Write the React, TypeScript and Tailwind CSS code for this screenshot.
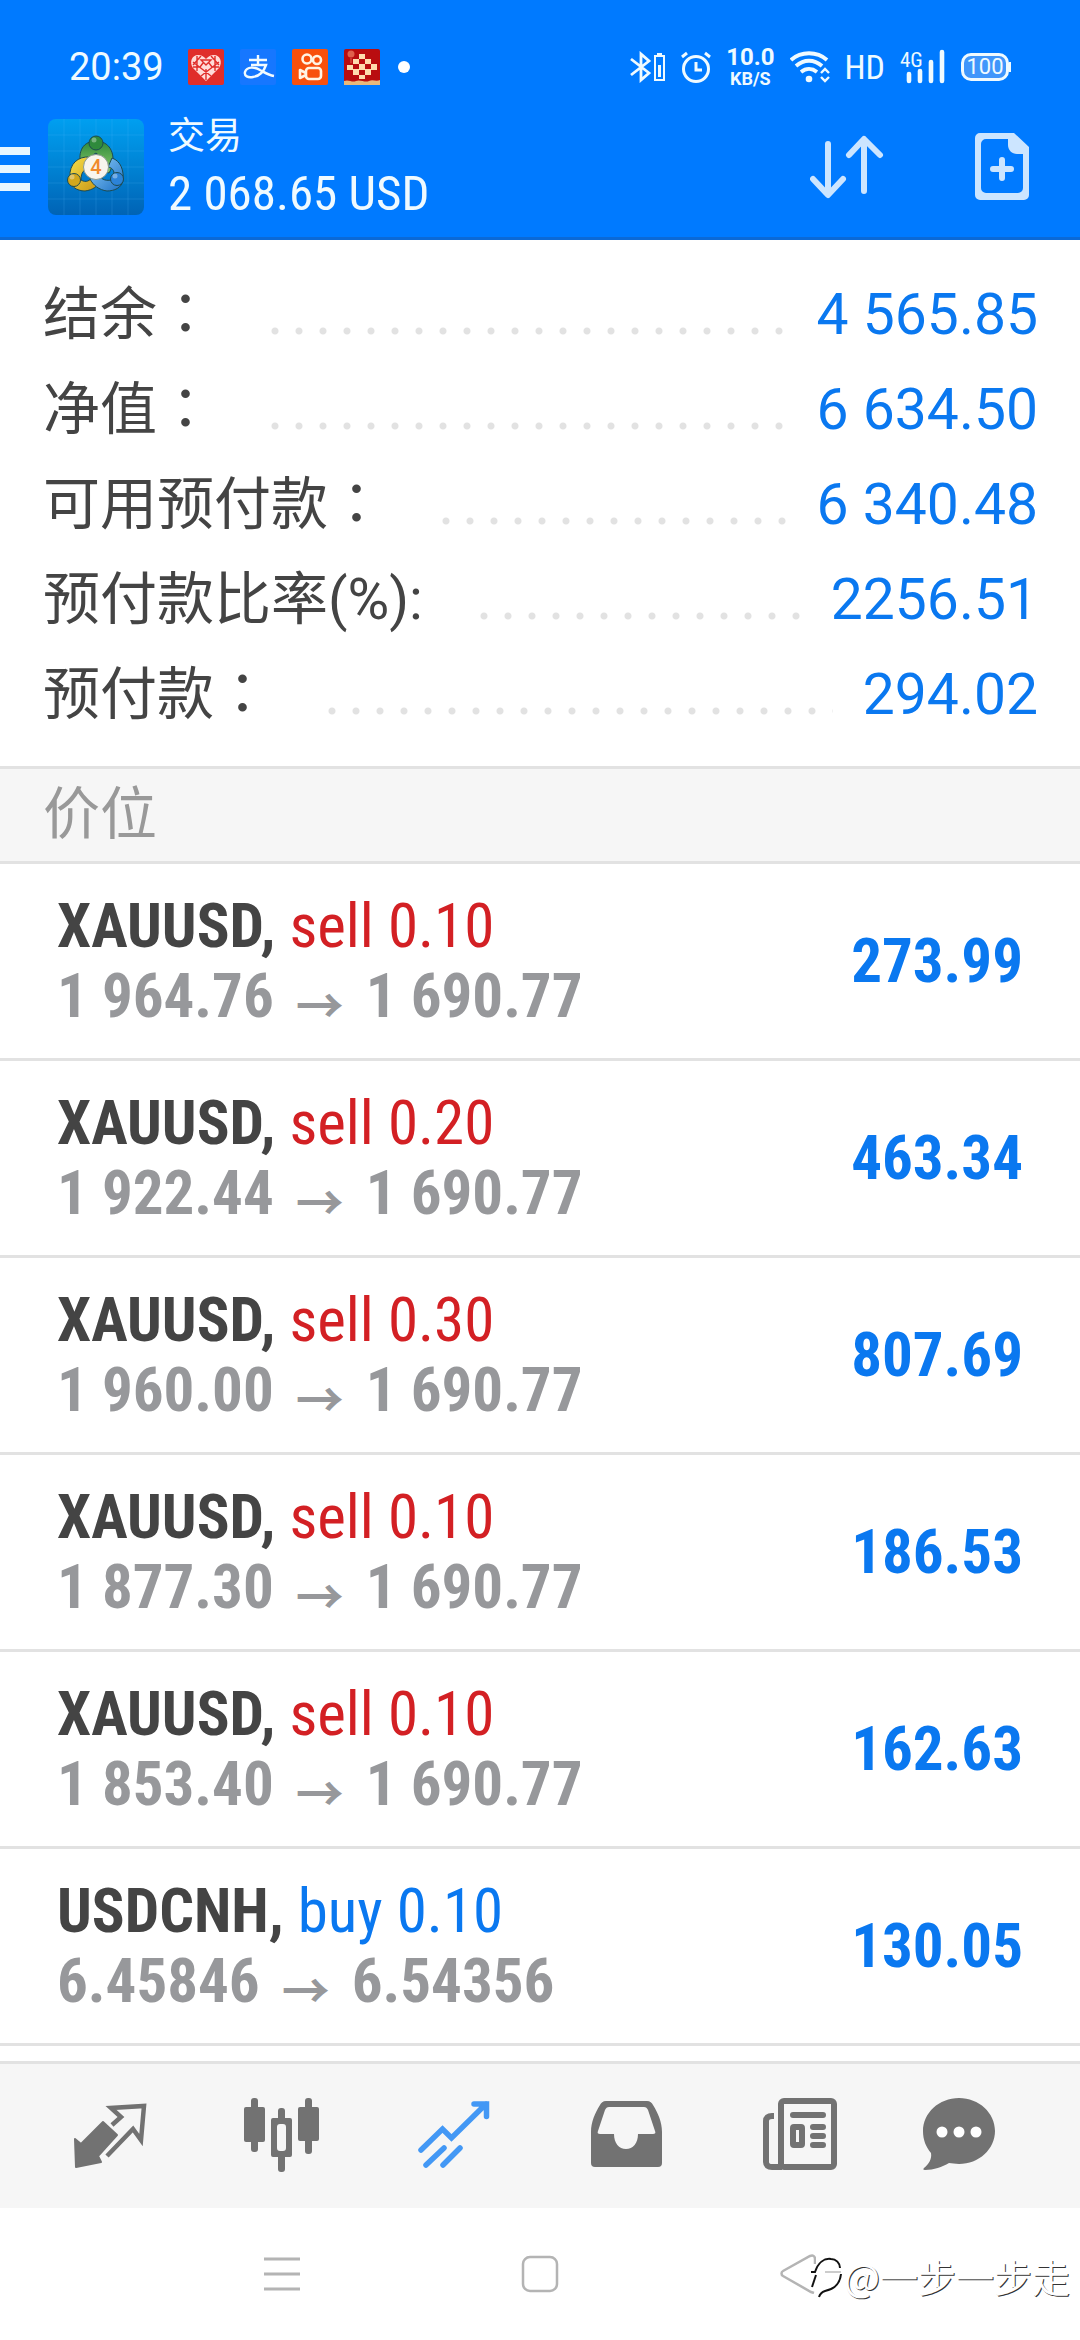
import React from 'react'

const ACCOUNT = [
    { label: '结余', colon: '：', value: '4 565.85' },
    { label: '净值', colon: '：', value: '6 634.50' },
    { label: '可用预付款', colon: '：', value: '6 340.48' },
    { label: '预付款比率(%)', colon: ':', value: '2256.51' },
    { label: '预付款', colon: '：', value: '294.02' },
]

const POSITIONS = [
    { symbol: 'XAUUSD', side: 'sell', volume: '0.10', open: '1 964.76', current: '1 690.77', profit: '273.99' },
    { symbol: 'XAUUSD', side: 'sell', volume: '0.20', open: '1 922.44', current: '1 690.77', profit: '463.34' },
    { symbol: 'XAUUSD', side: 'sell', volume: '0.30', open: '1 960.00', current: '1 690.77', profit: '807.69' },
    { symbol: 'XAUUSD', side: 'sell', volume: '0.10', open: '1 877.30', current: '1 690.77', profit: '186.53' },
    { symbol: 'XAUUSD', side: 'sell', volume: '0.10', open: '1 853.40', current: '1 690.77', profit: '162.63' },
    { symbol: 'USDCNH', side: 'buy', volume: '0.10', open: '6.45846', current: '6.54356', profit: '130.05' },
]

const HeartAppIcon = () => (
    <svg className="size-9" viewBox="0 0 36 36">
        <rect width="36" height="36" rx="2" fill="#e02e2a" />
        <path d="M18 32 5 19C1 13 4 6 10 6c4 0 6 2 8 4 2-2 4-4 8-4 6 0 9 7 5 13Z" fill="#ffdcd8" />
        <path d="M9 7v15M13 7l-8 9M5 13l18 14M23 7l8 9M31 13 13 27M27 7v15M13 11h10l-5 5ZM18 20v11M5 18h7l3-4M31 18h-7l-3-4" fill="none" stroke="#e02e2a" strokeWidth="1.4" />
    </svg>
)

const AlipayIcon = () => (
    <svg className="size-9" viewBox="0 0 36 36">
        <rect width="36" height="36" rx="2" fill="#1677ff" />
        <path d="M9 11h18M18 6v10M11 16h15c-2 6-6 11-13 12-5 1-9-1-8-5 2-6 10-5 15-2 4 2 8 5 14 6" fill="none" stroke="#f2fbff" strokeWidth="2.4" />
    </svg>
)

const CameraAppIcon = () => (
    <svg className="size-9" viewBox="0 0 36 36">
        <rect width="36" height="36" rx="2" fill="#f8500c" />
        <g fill="none" stroke="#fff4e4" strokeWidth="2.6" strokeLinejoin="round">
            <circle cx="15" cy="10" r="4.5" />
            <circle cx="25" cy="11" r="4" />
            <rect x="14" y="19" width="15" height="11" rx="3" />
            <path d="m14 24-6-3v8l6-3" />
        </g>
    </svg>
)

const BoardAppIcon = () => (
    <svg className="size-9" viewBox="0 0 36 36">
        <rect width="36" height="36" rx="2" fill="#b90d10" />
        <path d="M15 5h6v5h-6zM9 10h6v5H9zM21 10h6v5h-6zM3 16h6v5H3zM15 15h6v6h-6zM27 15h6v6h-6zM9 20h6v6H9zM21 20h6v6h-6zM15 26h6v4h-6z" fill="#ffdcae" />
        <path d="M0 36v-4c5-2 8 2 12 0s9 2 13 0 7 1 11-1v5Z" fill="#e8b97c" />
        <circle cx="7" cy="5" r="3.5" fill="#e0604c" />
        <path d="M7 9v5" stroke="#e0604c" strokeWidth="1" />
    </svg>
)

const BluetoothIcon = () => (
    <svg className="h-8 w-9" viewBox="0 0 36 32" fill="none" stroke="#effaff" strokeWidth="2.8">
        <path d="m1 8 18 14-8 7V3l8 7L1 24" />
        <rect x="25" y="5" width="9" height="24" strokeWidth="2" />
        <path d="M27 3h5" strokeWidth="2" />
        <path d="M29.5 14v12" strokeWidth="3" />
    </svg>
)

const AlarmIcon = () => (
    <svg className="h-8 w-[30px]" viewBox="0 0 30 32" fill="none" stroke="#effaff" strokeWidth="3">
        <circle cx="15" cy="18" r="12.5" />
        <path d="M15 11v8h6M1 6l5-4M29 6l-5-4" />
    </svg>
)

const WifiIcon = () => (
    <svg className="h-8 w-10" viewBox="0 0 40 32" fill="none" stroke="#effaff" strokeWidth="3.8">
        <path d="M1 9C11 0 27 0 37 9M6 15c8-7 18-7 26 0M11 21c5-4 11-4 16 0" />
        <circle cx="19" cy="28" r="3.3" fill="#effaff" stroke="none" />
        <path d="m31 22 4-4 4 4M31 26l4 4 4-4" strokeWidth="2.4" />
    </svg>
)

const SignalIcon = () => (
    <svg className="h-10 w-[46px]" viewBox="0 -4 46 40">
        <text x="0" y="16" fontSize="21" fill="#effaff" fontFamily="Roboto Condensed, Liberation Sans Narrow, sans-serif">4G</text>
        <path d="M9 23v7M20 20v10M31 11v19M42 1v29" stroke="#effaff" strokeWidth="4.6" strokeLinecap="round" />
    </svg>
)

const StatusBar = () => (
    <div className="flex h-24 items-center justify-between px-[69px] pt-[38px] text-[#effaff]">
        <div className="flex items-center">
            <span className="mr-6 font-[Roboto] text-[38px] leading-10">20:39</span>
            <div className="flex items-center gap-4">
                <HeartAppIcon />
                <AlipayIcon />
                <CameraAppIcon />
                <BoardAppIcon />
                <span className="ml-0.5 size-3 rounded-full bg-white" />
            </div>
        </div>
        <div className="flex items-center gap-[15px]">
            <BluetoothIcon />
            <AlarmIcon />
            <div className="flex flex-col items-center font-[Roboto] font-bold">
                <span className="text-[24px] leading-6">10.0</span>
                <span className="text-[18px] leading-5">KB/S</span>
            </div>
            <WifiIcon />
            <span className="font-['Roboto_Condensed','Liberation_Sans_Narrow',sans-serif] text-[34px] leading-8">HD</span>
            <SignalIcon />
            <div className="flex items-center">
                <span className="flex h-7 w-12 items-center justify-center rounded-[10px] border-3 border-[#effaff] bg-[#3f96fb] font-[Roboto] text-[22px] leading-6">100</span>
                <span className="h-2.5 w-0.5 bg-[#effaff]" />
            </div>
        </div>
    </div>
)

const AppLogo = () => (
    <svg className="size-24" viewBox="0 0 96 96">
        <defs>
            <linearGradient id="logoBg" x1="0" y1="0" x2="0" y2="1">
                <stop offset="0" stopColor="#009ff0" />
                <stop offset="0.5" stopColor="#0083d4" />
                <stop offset="1" stopColor="#0063b5" />
            </linearGradient>
            <linearGradient id="green" x1="0" y1="0" x2="0" y2="1">
                <stop offset="0" stopColor="#2f8a3c" />
                <stop offset="1" stopColor="#8fce6c" />
            </linearGradient>
            <linearGradient id="yellow" x1="0" y1="0" x2="1" y2="1">
                <stop offset="0" stopColor="#f7e04a" />
                <stop offset="1" stopColor="#c79314" />
            </linearGradient>
            <linearGradient id="blue" x1="0" y1="0" x2="1" y2="1">
                <stop offset="0" stopColor="#8fd0fa" />
                <stop offset="1" stopColor="#1c6fc4" />
            </linearGradient>
        </defs>
        <rect width="96" height="96" rx="8" fill="url(#logoBg)" />
        <path d="M16 0v96M32 0v96M48 0v96M64 0v96M80 0v96M0 16h96M0 32h96M0 48h96M0 64h96M0 80h96" stroke="#5cc4ff" strokeOpacity="0.18" />
        <g stroke="#1d4a50" strokeWidth="1">
            <path d="M36 50C29 42 31 26 42 23h12c12 4 14 20 7 31l-9-3c4-6 4-11-4-17-6 3-8 9-4 16Z" fill="url(#green)" />
            <path d="M42 38c-12-1-21 7-20 20-2 9 7 14 15 14 8-1 13-5 15-10l-7-5c-3 5-7 7-12 4 0-8 3-11 9-12Z" fill="url(#yellow)" />
            <path d="M64 39c9 3 12 13 11 22-1 8-9 11-16 11-8-1-14-6-17-12l7-6c4 7 10 9 17 6 1-8-1-11-6-12Z" fill="url(#blue)" />
            <circle cx="48" cy="24" r="7" fill="#2f8a3c" />
            <circle cx="26" cy="61" r="6.5" fill="#d2a71c" />
            <circle cx="69" cy="60" r="6.5" fill="#2c83d8" />
        </g>
        <g fill="#ffffff" fillOpacity="0.35">
            <circle cx="46" cy="21" r="2.5" />
            <circle cx="24" cy="58" r="2.5" />
            <circle cx="67" cy="57" r="2.5" />
        </g>
        <circle cx="48" cy="48" r="12.5" fill="#f8f5ee" stroke="#8a9a90" />
        <text x="48" y="55" textAnchor="middle" fontSize="20" fill="#f08a2c" fontWeight="500" fontFamily="Roboto, sans-serif">4</text>
    </svg>
)

const SortIcon = () => (
    <svg className="h-16 w-[74px]" viewBox="0 0 74 64" fill="none" stroke="#cce5ff" strokeWidth="6" strokeLinecap="round" strokeLinejoin="round">
        <path d="M18 9v50M3 44l15 16 15-16M54 56V5M39 20 54 4l16 16" />
    </svg>
)

const NewOrderIcon = () => (
    <svg className="h-[67px] w-[54px]" viewBox="0 0 54 67">
        <path d="M5 0h34l15 14v48a5 5 0 0 1-5 5H5a5 5 0 0 1-5-5V5a5 5 0 0 1 5-5ZM11 6a5 5 0 0 0-5 5v44a5 5 0 0 0 5 5h32a5 5 0 0 0 5-5V21h-6c-5 0-9-4-9-9V6Z" fill="#cce5ff" fillRule="evenodd" />
        <path d="M27 27v18M18 36h18" stroke="#cce5ff" strokeWidth="6" strokeLinecap="round" />
    </svg>
)

const AppBar = () => (
    <div className="flex h-36 items-center border-b-3 border-[#0b69d6] pr-[51px]">
        <button aria-label="Menu" className="flex w-[30px] flex-col gap-2.5 pt-1">
            <span className="h-2 w-full bg-[#e8f6ff]" />
            <span className="h-2 w-full bg-[#e8f6ff]" />
            <span className="h-2 w-full bg-[#e8f6ff]" />
        </button>
        <div className="ml-[18px]">
            <AppLogo />
        </div>
        <div className="ml-6 flex-1 text-[#effaff]">
            <h1 className="font-['Noto_Sans_CJK_SC',sans-serif] text-[37px] leading-[54px]">交易</h1>
            <div className="font-['Roboto_Condensed','Liberation_Sans_Narrow',sans-serif] text-[49px] leading-[68px]">2 068.65 USD</div>
        </div>
        <button aria-label="Sort" className="mr-[91px]">
            <SortIcon />
        </button>
        <button aria-label="New order">
            <NewOrderIcon />
        </button>
    </div>
)

const AccountSummary = () => {
    const rows = ACCOUNT.map((item) => {
        return (
            <div key={item.label} className="flex h-[95px] items-center">
                <dt className="font-[Roboto,'Noto_Sans_CJK_SC',sans-serif] text-[57px] leading-[95px] text-[#444444]">
                    {item.label}
                    <span className="font-[Roboto,'Noto_Sans_CJK_TC',sans-serif]" lang="zh-TW">{item.colon}</span>
                </dt>
                <div className="mt-8 mr-[30px] ml-[57px] h-2 flex-1 bg-[radial-gradient(circle_at_4px_4px,#e2e2e2_3px,transparent_4px)] bg-[size:24px_8px]" />
                <dd className="font-[Roboto] text-[57px] leading-[95px] text-[#0a78f0]">{item.value}</dd>
            </div>
        )
    })
    return <dl className="pt-[27px] pr-[42px] pb-6 pl-[43px]">{rows}</dl>
}

const PositionList = () => {
    const positions = POSITIONS.map((position, index) => {
        return (
            <li key={index} className="flex items-center justify-between border-b-3 border-[#e2e2e2] px-[57px] py-[27px] text-[61px] leading-[70px] font-bold">
                <div>
                    <div className="text-[#444444]">
                        {position.symbol},{' '}
                        <span className={position.side === 'sell' ? 'font-normal text-[#d32024]' : 'font-normal text-[#0a78f0]'}>
                            {position.side} {position.volume}
                        </span>
                    </div>
                    <div className="flex items-center text-[#97989b]">
                        <span>{position.open}</span>
                        <span className="mx-[22px] pt-3 font-['Noto_Sans_CJK_SC',sans-serif] text-[48px] leading-[48px]">→</span>
                        <span>{position.current}</span>
                    </div>
                </div>
                <div className="text-[#0a78f0]">{position.profit}</div>
            </li>
        )
    })
    return <ul className="flex-1 font-['Roboto_Condensed','Liberation_Sans_Narrow',sans-serif]">{positions}</ul>
}

const QuotesIcon = () => (
    <svg className="size-[76px]" viewBox="0 0 76 76">
        <path d="m3 41 6 5 22-22 14 13-19 21 3 6-25 5Z" fill="#727272" stroke="#727272" strokeWidth="2" strokeLinejoin="round" />
        <path d="m40 27 9-8-10-9 33-2-3 34-8-11-26 27" fill="none" stroke="#727272" strokeWidth="4.5" />
    </svg>
)

const ChartIcon = () => (
    <svg className="size-[76px]" viewBox="0 0 76 76" fill="#727272">
        <rect x="7" y="0" width="7" height="54" rx="3" />
        <rect x="0" y="9" width="21" height="35" rx="2" />
        <rect x="61" y="0" width="7" height="56" rx="3" />
        <rect x="54" y="9" width="21" height="34" rx="2" />
        <rect x="34" y="10" width="7" height="13" rx="3" />
        <rect x="34" y="55" width="7" height="19" rx="3" />
        <path d="M29 20h17a2 2 0 0 1 2 2v35a2 2 0 0 1-2 2H29a2 2 0 0 1-2-2V22a2 2 0 0 1 2-2Zm7 6a3 3 0 0 0-3 3v21a3 3 0 0 0 3 3h3a3 3 0 0 0 3-3V29a3 3 0 0 0-3-3Z" fillRule="evenodd" />
    </svg>
)

const TradeIcon = () => (
    <svg className="size-[76px]" viewBox="0 0 76 76" fill="none" stroke="#4398f5" strokeWidth="5.5" strokeLinecap="round">
        <path d="m5 52 21.5-21 9 9L70 6M58 6h12.5v12.5M10 67l18-17M27 67l17-17" />
    </svg>
)

const HistoryIcon = () => (
    <svg className="size-[76px]" viewBox="0 0 76 76">
        <path d="M18 3h41c3 0 5 2 6 4 5 8 9 17 9 27v31a4 4 0 0 1-4 4H7a4 4 0 0 1-4-4V34C3 24 7 15 12 7c1-2 3-4 6-4Zm3 6c-2 0-3 1-4 3l-7 21c-1 2 0 3 2 3h14c0 9 5 15 12 15s12-6 12-15h15c2 0 3-1 2-3l-7-21c-1-2-2-3-4-3Z" fill="#727272" fillRule="evenodd" />
    </svg>
)

const NewsIcon = () => (
    <svg className="size-[76px]" viewBox="0 0 76 76" fill="none" stroke="#727272" strokeWidth="6">
        <rect x="18" y="3" width="53" height="66" rx="3" />
        <path d="M11 18H9c-4 0-6 2-6 5v41c0 3 2 5 6 5h10" />
        <path d="M30 17h30M50 29h10M50 38h10M50 47h10" strokeLinecap="round" />
        <rect x="30" y="29" width="9" height="18" rx="1" />
    </svg>
)

const MessagesIcon = () => (
    <svg className="size-[76px]" viewBox="0 0 76 76">
        <path d="M39 0c20 0 36 15 36 33S59 66 39 66c-4 0-7-1-10-1-7 4-15 7-24 7-2 0-2-1-1-2 5-4 8-9 7-15-5-6-8-13-8-22C3 15 19 0 39 0Z" fill="#727272" />
        <circle cx="22" cy="34" r="5.5" fill="#fff" />
        <circle cx="39" cy="34" r="5.5" fill="#fff" />
        <circle cx="56" cy="34" r="5.5" fill="#fff" />
    </svg>
)

const TabBar = () => (
    <nav className="grid h-[147px] grid-cols-6 items-center justify-items-center border-t-3 border-[#e2e2e2] bg-[#f6f6f6] px-6">
        <button aria-label="Quotes"><QuotesIcon /></button>
        <button aria-label="Chart"><ChartIcon /></button>
        <button aria-label="Trade"><TradeIcon /></button>
        <button aria-label="History"><HistoryIcon /></button>
        <button aria-label="News" className="pl-1.5"><NewsIcon /></button>
        <button aria-label="Messages" className="pr-6"><MessagesIcon /></button>
    </nav>
)

const SystemNav = () => (
    <div className="relative grid h-[132px] grid-cols-3 items-center justify-items-center px-[153px]">
        <button aria-label="Recent apps">
            <svg className="size-9" viewBox="0 0 36 36" stroke="#b4b4b4" strokeWidth="3">
                <path d="M0 3h36M0 18h36M0 33h36" />
            </svg>
        </button>
        <button aria-label="Home">
            <svg className="size-[38px]" viewBox="0 0 38 38" fill="none" stroke="#b4b4b4" strokeWidth="2.5">
                <rect x="2" y="2" width="34" height="34" rx="7" />
            </svg>
        </button>
        <button aria-label="Back">
            <svg className="h-10 w-9" viewBox="0 0 36 40" fill="none" stroke="#b4b4b4" strokeWidth="2.5">
                <path d="M35 10V5c0-3-2-4-5-3L3 17c-2 1-2 4 0 5l28 16 3 1" />
            </svg>
        </button>
        <div className="absolute top-[46px] right-2.5 flex items-center">
            <svg className="h-11 w-[34px]" viewBox="0 0 34 44" fill="none" stroke="#111">
                <path d="M1 18h4c3-9 9-14 16-13 5 0 9 4 9 9" strokeWidth="2" />
                <path d="M31 20c-1 10-6 15-16 17-3 1-5 3-6 6" strokeWidth="2" />
                <path d="m6 21-4 12" strokeWidth="2" />
                <path d="M15 18h16" stroke="#999" strokeWidth="1" />
            </svg>
            <span className="font-['Noto_Sans_CJK_SC',sans-serif] text-[38px] leading-[44px] text-white [text-shadow:1px_1px_0_#333]">@一步一步走</span>
        </div>
    </div>
)

export default function App() {
    return (
        <div className="flex min-h-screen w-full flex-col bg-white">
            <header className="bg-[#007aff]">
                <StatusBar />
                <AppBar />
            </header>
            <AccountSummary />
            <h2 className="border-y-3 border-[#e2e2e2] bg-[#f6f6f6] px-[43px] pb-3 font-['Noto_Sans_CJK_SC',sans-serif] text-[57px] leading-20 font-normal text-[#999999]">价位</h2>
            <PositionList />
            <TabBar />
            <SystemNav />
        </div>
    )
}
